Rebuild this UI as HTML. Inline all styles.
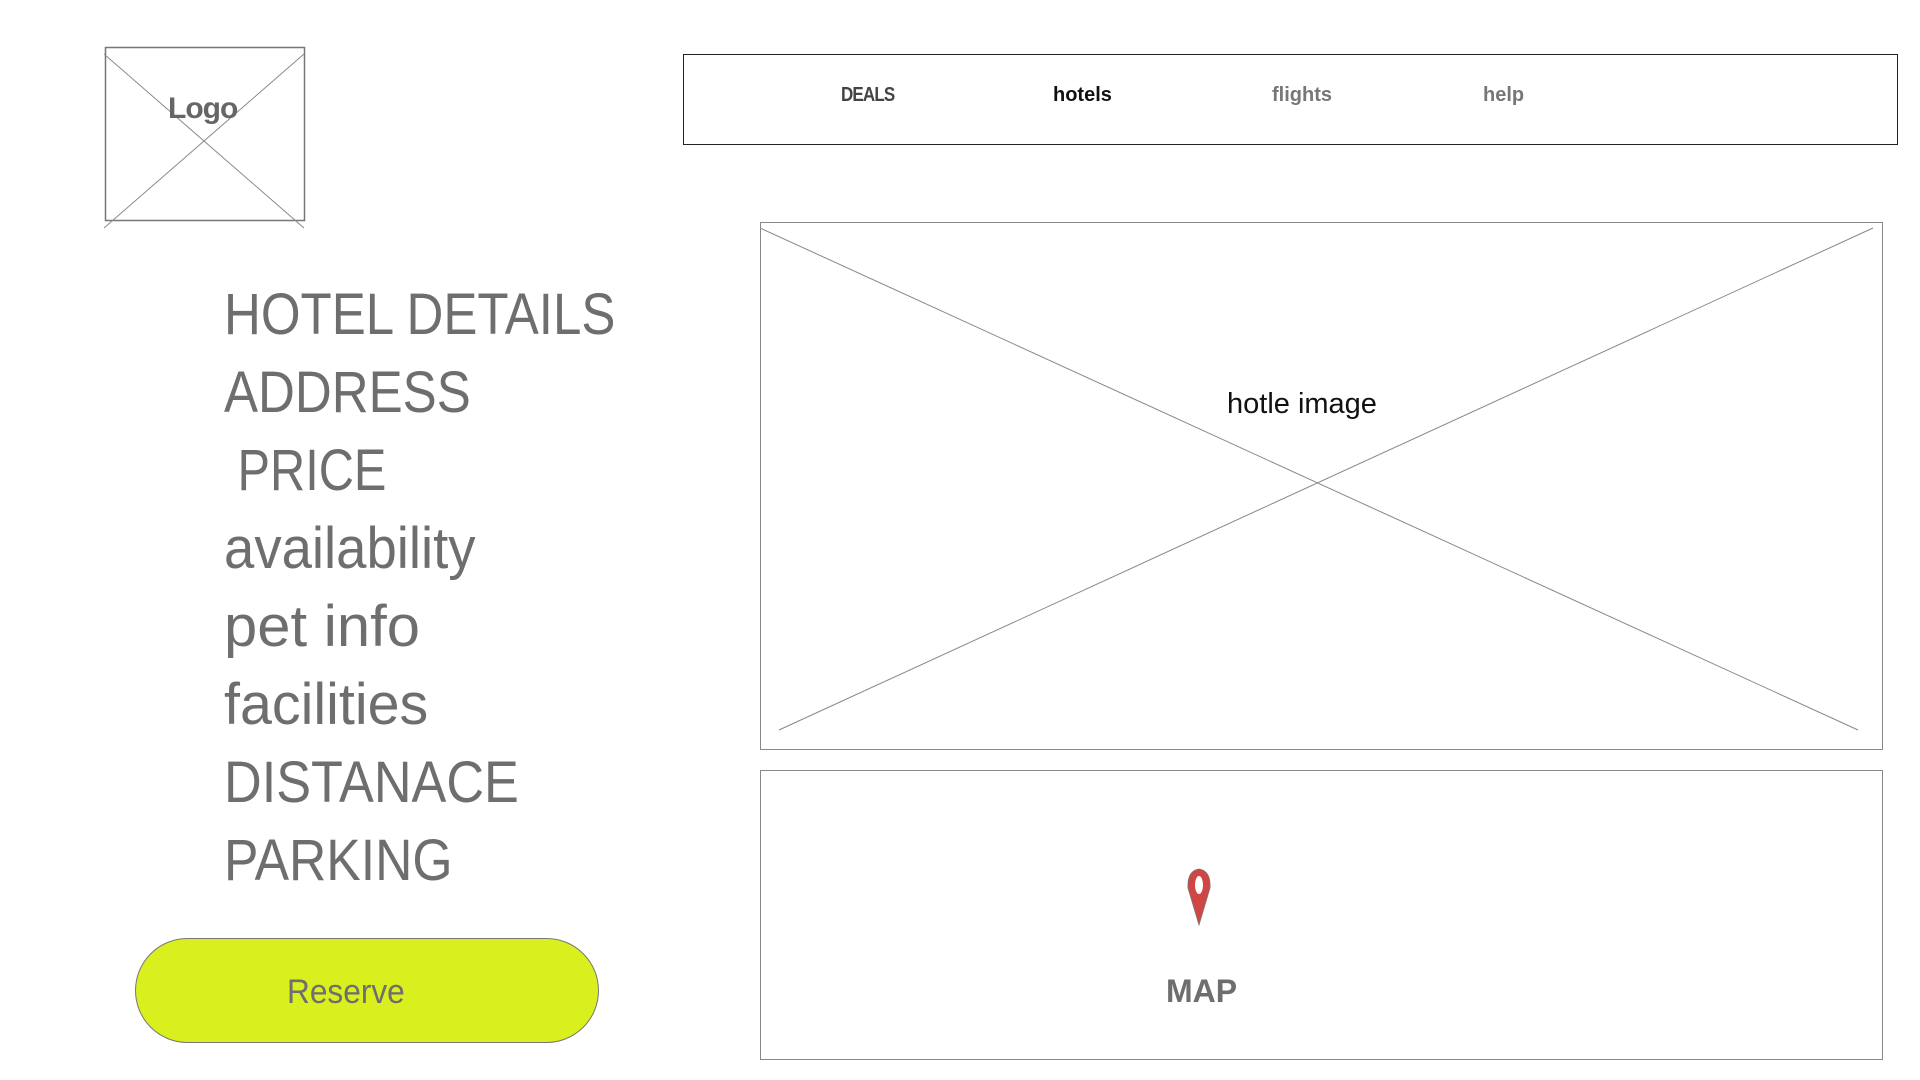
<!DOCTYPE html>
<html><head><meta charset="utf-8"><style>
html,body{margin:0;padding:0;background:#fff;width:1920px;height:1080px;overflow:hidden;font-family:"Liberation Sans",sans-serif;}
.a{position:absolute;white-space:nowrap}
.nav{position:absolute;left:683px;top:54px;width:1215px;height:91px;border:1px solid #222;box-sizing:border-box}
.n{position:absolute;top:83px;font-size:20px;line-height:24px}
.li{position:absolute;left:224px;font-size:58px;color:#6e6e6e;line-height:64px;transform:scaleX(0.88);transform-origin:left center}
.btn{position:absolute;left:135px;top:938px;width:464px;height:105px;border-radius:53px;background:#d9ef1e;border:1px solid #777;box-sizing:border-box}
</style></head><body>
<svg class="a" style="left:0;top:0" width="1920" height="1080">
<rect x="105.5" y="47.5" width="199" height="173" fill="none" stroke="#777" stroke-width="1.5"/>
<line x1="104" y1="54" x2="304" y2="228" stroke="#888" stroke-width="1"/>
<line x1="304" y1="54" x2="104" y2="228" stroke="#888" stroke-width="1"/>
<rect x="760.5" y="222.5" width="1122" height="527" fill="none" stroke="#888" stroke-width="1"/>
<line x1="760" y1="228" x2="1858" y2="730" stroke="#888" stroke-width="1"/>
<line x1="1873" y1="228" x2="779" y2="730" stroke="#888" stroke-width="1"/>
<rect x="760.5" y="770.5" width="1122" height="289" fill="none" stroke="#888" stroke-width="1"/>
<path d="M1199 925 L1188 888 Q1187 871 1199 869 Q1211 871 1210 888 Z" fill="#d24545" stroke="#777" stroke-width="0.8"/>
<ellipse cx="1199" cy="885" rx="4" ry="9" fill="#fff"/>
</svg>
<div class="a" style="left:168px;top:92px;font-size:30px;font-weight:bold;color:#666;letter-spacing:-1px">Logo</div>
<div class="nav"></div>
<div class="n a" style="left:841px;color:#444;letter-spacing:-1px;font-weight:bold;transform:scaleX(0.85);transform-origin:left">DEALS</div>
<div class="n a" style="left:1053px;color:#111;font-weight:bold">hotels</div>
<div class="n a" style="left:1272px;color:#777;font-weight:bold">flights</div>
<div class="n a" style="left:1483px;color:#777;font-weight:bold">help</div>
<div class="a" style="left:1227px;top:388px;font-size:29px;color:#111">hotle image</div>
<div class="a" style="left:1166px;top:973px;font-size:32px;font-weight:bold;color:#6e6e6e">MAP</div>
<div class="li" style="top:283px">HOTEL DETAILS</div>
<div class="li" style="top:361px">ADDRESS</div>
<div class="li" style="top:439px;transform:scaleX(0.84)">&nbsp;PRICE</div>
<div class="li" style="top:517px;transform:scaleX(0.94)">availability</div>
<div class="li" style="top:595px;transform:scaleX(1.03)">pet info</div>
<div class="li" style="top:673px;transform:scaleX(0.99)">facilities</div>
<div class="li" style="top:751px;transform:scaleX(0.9)">DISTANACE</div>
<div class="li" style="top:829px;transform:scaleX(0.89)">PARKING</div>
<div class="btn"></div>
<div class="a" style="left:287px;top:973px;font-size:34px;color:#6e6e6e;transform:scaleX(0.93);transform-origin:left">Reserve</div>
</body></html>
